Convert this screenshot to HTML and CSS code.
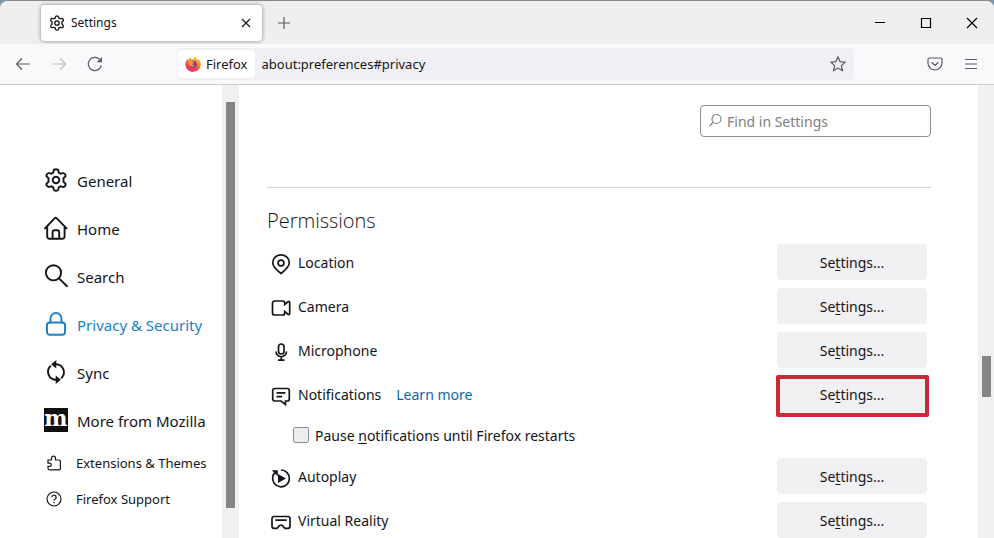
FILE: index.html
```html
<!DOCTYPE html>
<html lang="en">
<head>
<meta charset="utf-8">
<title>Settings</title>
<link rel="stylesheet" href="styles.css">
</head>
<body>
<svg class="defs" aria-hidden="true">
  <symbol id="gear" viewBox="0 0 24 24"><path d="M9.7 2.8Q9.9 1.2 12 1.2T14.3 2.8L14.7 4.6Q15.8 5 16.7 5.8L18.6 5.2Q20.2 4.8 21.2 6.5T20.8 9L19.4 10.3Q19.8 12 19.4 13.7L20.8 15Q22.2 16 21.2 17.7T18.6 18.8L16.7 18.2Q15.8 19 14.7 19.4L14.3 21.2Q13.9 22.8 12 22.8T9.7 21.2L9.3 19.4Q8.2 19 7.3 18.2L5.4 18.8Q3.8 19.3 2.8 17.6T3.2 15L4.6 13.7Q4.2 12 4.6 10.3L3.2 9Q1.8 8 2.8 6.4T5.4 5.2L7.3 5.8Q8.2 5 9.3 4.6Z"/><circle cx="12" cy="12" r="3.3"/></symbol>
</svg>
<div class="window">
  <header class="titlebar">
    <div class="tab">
      <svg class="i16 tab-gear"><use href="#gear"/></svg>
      <span class="tab-title">Settings</span>
      <button class="icon-btn tab-close" aria-label="Close tab"><svg class="i16" viewBox="0 0 16 16"><path d="M4 4l8 8M12 4l-8 8"/></svg></button>
    </div>
    <button class="icon-btn new-tab" aria-label="New tab"><svg class="i16" viewBox="0 0 16 16"><path d="M8 2v12M2 8h12"/></svg></button>
    <div class="controls">
      <button class="control" aria-label="Minimize"><svg class="i16" viewBox="0 0 16 16"><path d="M3 7.5h10"/></svg></button>
      <button class="control" aria-label="Maximize"><svg class="i16" viewBox="0 0 16 16"><path d="M3.500 3.500h9v9h-9z"/></svg></button>
      <button class="control" aria-label="Close"><svg class="i16" viewBox="0 0 16 16"><path d="M3 3l10 10M13 3L3 13"/></svg></button>
    </div>
  </header>
  <nav class="toolbar" aria-label="Navigation">
    <div class="nav-buttons">
      <button class="icon-btn" aria-label="Back"><svg class="i16" viewBox="0 0 16 16"><path d="M15 8H1.500M7 2.500L1.500 8 7 13.500"/></svg></button>
      <button class="icon-btn" aria-label="Forward" disabled><svg class="i16" viewBox="0 0 16 16"><path d="M1 8h13.500M9 2.500L14.500 8 9 13.500"/></svg></button>
      <button class="icon-btn" aria-label="Reload"><svg class="i16" viewBox="0 0 16 16"><path d="M14.300 9.500A6.600 6.600 0 1 1 12.700 3.400"/><path class="solid" d="M15 1v5.300H9.700z"/></svg></button>
    </div>
    <div class="urlbar">
      <button class="identity"><svg class="i16 logo" viewBox="0 0 16 16">
        <defs><linearGradient id="flame" x1=".8" y1="0" x2=".25" y2="1"><stop offset="0" stop-color="#ffd83a"/><stop offset=".4" stop-color="#ff8428"/><stop offset=".75" stop-color="#f43b4d"/><stop offset="1" stop-color="#d92b79"/></linearGradient></defs>
        <path fill="url(#flame)" d="M10 .2c.9 1 1.500 1.900 1.700 2.700.8.400 1.400.9 1.700 1.500l.3-1.300c1.500 1.600 2.200 3.500 2.100 5.500-.2 4.200-3.500 7.200-7.700 7.200C3.700 15.800.5 12.500.4 8.500.3 6.300 1.100 4.400 2.600 2.900l.3 1.500.8-.6c.2-1 .7-1.900 1.500-2.500.1 1 .5 1.700 1.300 2.200h2C8.700 2.300 9.200 1.200 10 .2z"/>
        <circle cx="8.300" cy="8.200" r="3.500" fill="#7a3f9e"/><path fill="#ff9a2c" d="M3.300 5.200c1.500-.8 3.100-.6 4.300.3l1.700.4c-.3 1.100-1.100 1.400-2.200 1.700.1 1.300 1.600 2 3.200 1.400-1.400 2.100-4.600 1.900-5.900-.2-.7-1.200-.8-2.400-1.100-3.600z"/>
      </svg><span>Firefox</span></button>
      <input class="url" type="text" aria-label="Address" value="about:preferences#privacy">
      <button class="icon-btn star" aria-label="Bookmark"><svg class="i16" viewBox="0 0 16 16"><path d="M8 1l2.100 4.600 5 .6-3.700 3.400 1 5L8 12.100l-4.400 2.500 1-5L.9 6.200l5-.6z"/></svg></button>
    </div>
    <div class="tools">
      <button class="icon-btn" aria-label="Save to Pocket"><svg class="i16" viewBox="0 0 16 16"><path d="M2.500 2h11A1.500 1.500 0 0 1 15 3.500V7A7 7 0 0 1 1 7V3.500A1.500 1.500 0 0 1 2.500 2zM4.700 6.200L8 9.400l3.300-3.200"/></svg></button>
      <button class="icon-btn" aria-label="Menu"><svg class="i16" viewBox="0 0 16 16"><path d="M2 3.500h12M2 8h12M2 12.500h12"/></svg></button>
    </div>
  </nav>
  <div class="content">
    <aside class="sidebar">
      <a class="category" href="#general"><svg class="i24"><use href="#gear"/></svg>General</a>
      <a class="category" href="#home"><svg class="i24" viewBox="0 0 24 24"><path d="M1 12.300L10.600 2.400q1.100-1.200 2.200 0L22.600 12.300M3.200 10.200V20.500a2.300 2.300 0 0 0 2.300 2.300h12.800a2.300 2.300 0 0 0 2.300-2.300V10.200M8.600 22.500v-6.300q0-2 2-2h2.600q2 0 2 2v6.300"/></svg>Home</a>
      <a class="category" href="#search"><svg class="i24" viewBox="0 0 24 24"><circle cx="9.500" cy="8.800" r="7.600"/><path d="M15 14.400l8 7.800"/></svg>Search</a>
      <a class="category selected" href="#privacy" aria-current="page"><svg class="i24" viewBox="0 0 24 24"><rect x="3" y="10.500" width="18" height="12.300" rx="2.800"/><path d="M6.500 10.500V6.500a5.500 5.500 0 0 1 11 0v4"/></svg>Privacy &amp; Security</a>
      <a class="category" href="#sync"><svg class="i24 sync" viewBox="0 0 24 24"><path d="M12 4.200A8 8 0 0 1 17.600 17.800M12 19.800A8 8 0 0 1 6.400 6.200"/><path class="solid" d="M12.300 0v8.400L7.200 4.200zM11.700 15.600V24l5.100-4.200z"/></svg>Sync</a>
      <a class="category" href="#more"><span class="mozilla" aria-hidden="true">m</span>More from Mozilla</a>
      <a class="category small" href="#addons"><svg class="i16" viewBox="0 0 16 16"><path d="M2 5h3.500V3.200a2 2 0 0 1 4 0V5H13a1.400 1.400 0 0 1 1.400 1.400v7A1.400 1.400 0 0 1 13 14.800H3.500A1.500 1.500 0 0 1 2 13.300v-2h1.700a1.600 1.600 0 0 0 0-3.200H2z"/></svg>Extensions &amp; Themes</a>
      <a class="category small" href="#support"><svg class="i16" viewBox="0 0 16 16"><circle cx="8" cy="8" r="7"/><path d="M5.900 6.300a2.100 2.100 0 1 1 3 1.900q-.9.500-.9 1.500M8 11v1.300"/></svg>Firefox Support</a>
    </aside>
    <div class="track side-track"><div class="thumb"></div></div>
    <main class="main">
      <label class="find"><svg class="i16" viewBox="0 0 16 16"><circle cx="9.500" cy="6" r="4.500"/><path d="M6.300 9.200L2.500 13"/></svg><input type="search" placeholder="Find in Settings" aria-label="Find in Settings"></label>
      <section class="permissions">
        <h2>Permissions</h2>
        <div class="row"><svg class="i20" viewBox="0 0 20 20"><path d="M10 19.500Q1.700 13 1.700 8.700a8.300 7.900 0 0 1 16.600 0Q18.300 13 10 19.500z"/><circle cx="10" cy="9" r="2.900"/></svg><span>Location</span><button class="settings">Se<u>t</u>tings...</button></div>
        <div class="row"><svg class="i20" viewBox="0 0 20 20"><path d="M3.500 3h8.200a2 2 0 0 1 2 2v1.500l3.300-2.700q1.700-1 1.700.9v10.600q0 1.900-1.700.9L13.700 13.500V15a2 2 0 0 1-2 2H3.500a2 2 0 0 1-2-2V5a2 2 0 0 1 2-2z"/></svg><span>Camera</span><button class="settings">Se<u>t</u>tings...</button></div>
        <div class="row"><svg class="i20" viewBox="0 0 20 20"><rect x="7.500" y="2" width="5.500" height="10" rx="2.750"/><path d="M5 9.500a5.200 5.200 0 0 0 10.500 0M10.250 15v3.200M7 18.200h6.500"/></svg><span>Microphone</span><button class="settings">Se<u>t</u>tings...</button></div>
        <div class="row"><svg class="i20" viewBox="0 0 20 20"><path d="M3.700 2.500h12.600a2 2 0 0 1 2 2v8.500a2 2 0 0 1-2 2H14.500v3.500L10 15H3.700a2 2 0 0 1-2-2V4.500a2 2 0 0 1 2-2zM5.500 6.900h9M5.500 10.700h5.500"/></svg><span>Notifications</span><a class="learn" href="#learn">Learn more</a><button class="settings highlighted">Se<u>t</u>tings...</button></div>
        <div class="pause"><input type="checkbox" id="pause"><label for="pause">Pause <u>n</u>otifications until Firefox restarts</label></div>
        <div class="row"><svg class="i20" viewBox="0 0 20 20"><path d="M10 2a8.400 8.400 0 1 1-8.300 7"/><path d="M1.700 9a8 8 0 0 1 2.800-5"/><path class="solid" d="M.8 2.300h6v6zM7 6l8 4.500L7 15z"/></svg><span>Autoplay</span><button class="settings">Se<u>t</u>tings...</button></div>
        <div class="row"><svg class="i20" viewBox="0 0 20 20"><path d="M3 4.500h14a2 2 0 0 1 2 2v7.800a2 2 0 0 1-2 2h-3L11.300 13.500q-1.300-1-2.600 0L6 16.300H3a2 2 0 0 1-2-2V6.500a2 2 0 0 1 2-2zM4.300 8.200h11.400"/></svg><span>Virtual Reality</span><button class="settings">Se<u>t</u>tings...</button></div>
      </section>
    </main>
    <div class="track main-track"><div class="thumb"></div></div>
  </div>
</div>
</body>
</html>
```
FILE: styles.css
```css
* { box-sizing: border-box; }
body {
  margin: 0;
  background: #8095aa;
  color: #15141a;
  font-family: "Noto Sans", "Open Sans", sans-serif;
  font-size: 14px;
}
button, input { font: inherit; color: inherit; }
button { border: 0; padding: 0; background: none; }
a { color: inherit; text-decoration: none; }
svg { fill: none; stroke: currentColor; flex: none; overflow: visible; }
.defs { position: absolute; width: 0; height: 0; }
.solid { fill: currentColor; stroke: none; }
.i16 { width: 16px; height: 16px; stroke-width: 1.2; }
.i20 { width: 20px; height: 20px; stroke-width: 1.7; }
.i24 { width: 24px; height: 24px; stroke-width: 1.9; stroke-linecap: round; }
.icon-btn { display: grid; place-items: center; width: 36px; height: 32px; color: #5b5b66; }
.icon-btn:disabled { color: #bdbdc2; }

.window {
  display: flex;
  flex-direction: column;
  height: 100vh;
  overflow: hidden;
  border-top: 1px solid #85888d;
  border-radius: 8px 8px 0 0;
  background: #fff;
}
.titlebar { display: flex; align-items: center; height: 43px; padding-left: 41px; background: #efeff0; }
.tab {
  display: flex;
  align-items: center;
  gap: 6px;
  width: 221px;
  height: 36px;
  padding-left: 8px;
  border-radius: 4px;
  background: #fff;
  box-shadow: 0 0 4px #0000006b;
}
.tab-gear { stroke-width: 2; }
.tab-title { flex: 1; font-size: 12px; }
.tab-close { width: 32px; color: #15141a; }
.new-tab { margin-left: 4px; }
.controls { display: flex; margin: 0 -1px 0 auto; }
.control { display: grid; place-items: center; width: 46px; height: 32px; color: #000; }

.toolbar {
  display: flex;
  align-items: center;
  height: 41px;
  padding: 0 5px;
  border-bottom: 1px solid #ccccd0;
  background: #f9f9fb;
}
.nav-buttons, .tools { display: flex; }
.urlbar {
  display: flex;
  flex: 1;
  align-items: center;
  height: 32px;
  margin: 0 63px 0 64px;
  padding-left: 1px;
  border-radius: 4px;
  background: #f0f0f4;
}
.identity {
  display: flex;
  align-items: center;
  gap: 5px;
  height: 28px;
  padding: 0 7px;
  border-radius: 3px;
  background: #fff;
  font-size: 13px;
}
.logo { stroke: none; }
.url { flex: 1; min-width: 0; padding: 0 7px; border: 0; background: none; font-size: 13px; }
.star { width: 32px; }

.content { display: flex; flex: 1; min-height: 0; }
.sidebar { flex: none; width: 222px; padding: 72px 0 0 44px; overflow: hidden; }
.category { display: flex; align-items: center; gap: 9px; height: 48px; font-size: 15px; white-space: nowrap; }
.category .i24, .mozilla { margin-bottom: 2px; }
.category.selected { color: #1a7fc8; }
.category.small { gap: 14px; height: 36px; padding-left: 2px; font-size: 13px; }
.mozilla {
  display: flex;
  justify-content: center;
  width: 24px;
  height: 24px;
  background: #111;
  color: #fff;
  font: bold 22px/20px "DejaVu Serif", serif;
}

.track { display: grid; flex: none; background: #f0f0f0; }
.side-track { width: 17px; padding: 0 4px; grid-template-rows: 17fr 406fr 30fr; }
.main-track { width: 16px; padding: 0 3px 0 4px; grid-template-rows: 271fr 41fr 141fr; }
.thumb { grid-row: 2; background: #858585; }

.main { flex: 1; min-width: 0; padding: 20px 47px 0 28px; overflow: hidden; }
.find {
  display: flex;
  align-items: center;
  gap: 4px;
  width: 231px;
  height: 32px;
  margin: 0 0 50px auto;
  padding: 0 6px;
  border: 1px solid #8f8f9d;
  border-radius: 4px;
  color: #808080;
}
.find input { flex: 1; min-width: 0; padding: 0; border: 0; background: none; outline: 0; }
.find input::placeholder { color: #808080; opacity: 1; }
.permissions { display: grid; gap: 8px; border-top: 1px solid #d4d4d8; }
h2 { margin: 19px 0 1px; font-family: "Open Sans", sans-serif; font-size: 20px; font-weight: 300; line-height: 28px; }
.row { display: flex; align-items: center; height: 36px; padding: 0 4px; }
.row .i20 { margin: 4px 7px 0 0; }
.learn { margin-left: 15px; color: #0a6aa8; }
.settings { width: 150px; height: 36px; margin-left: auto; border-radius: 4px; background: #f0f0f2; }
.highlighted { position: relative; }
.highlighted::after {
  content: "";
  position: absolute;
  inset: -1px -2px -5px -1px;
  border: 4px solid #c92a35;
  border-radius: 2px;
}
u { text-underline-offset: 2px; }
.pause { display: flex; align-items: center; gap: 6px; height: 30px; padding-left: 26px; }
.pause input { appearance: none; width: 16px; height: 16px; margin: 0; border: 1px solid #8f8f9d; border-radius: 2px; background: #ededf0; }
```
